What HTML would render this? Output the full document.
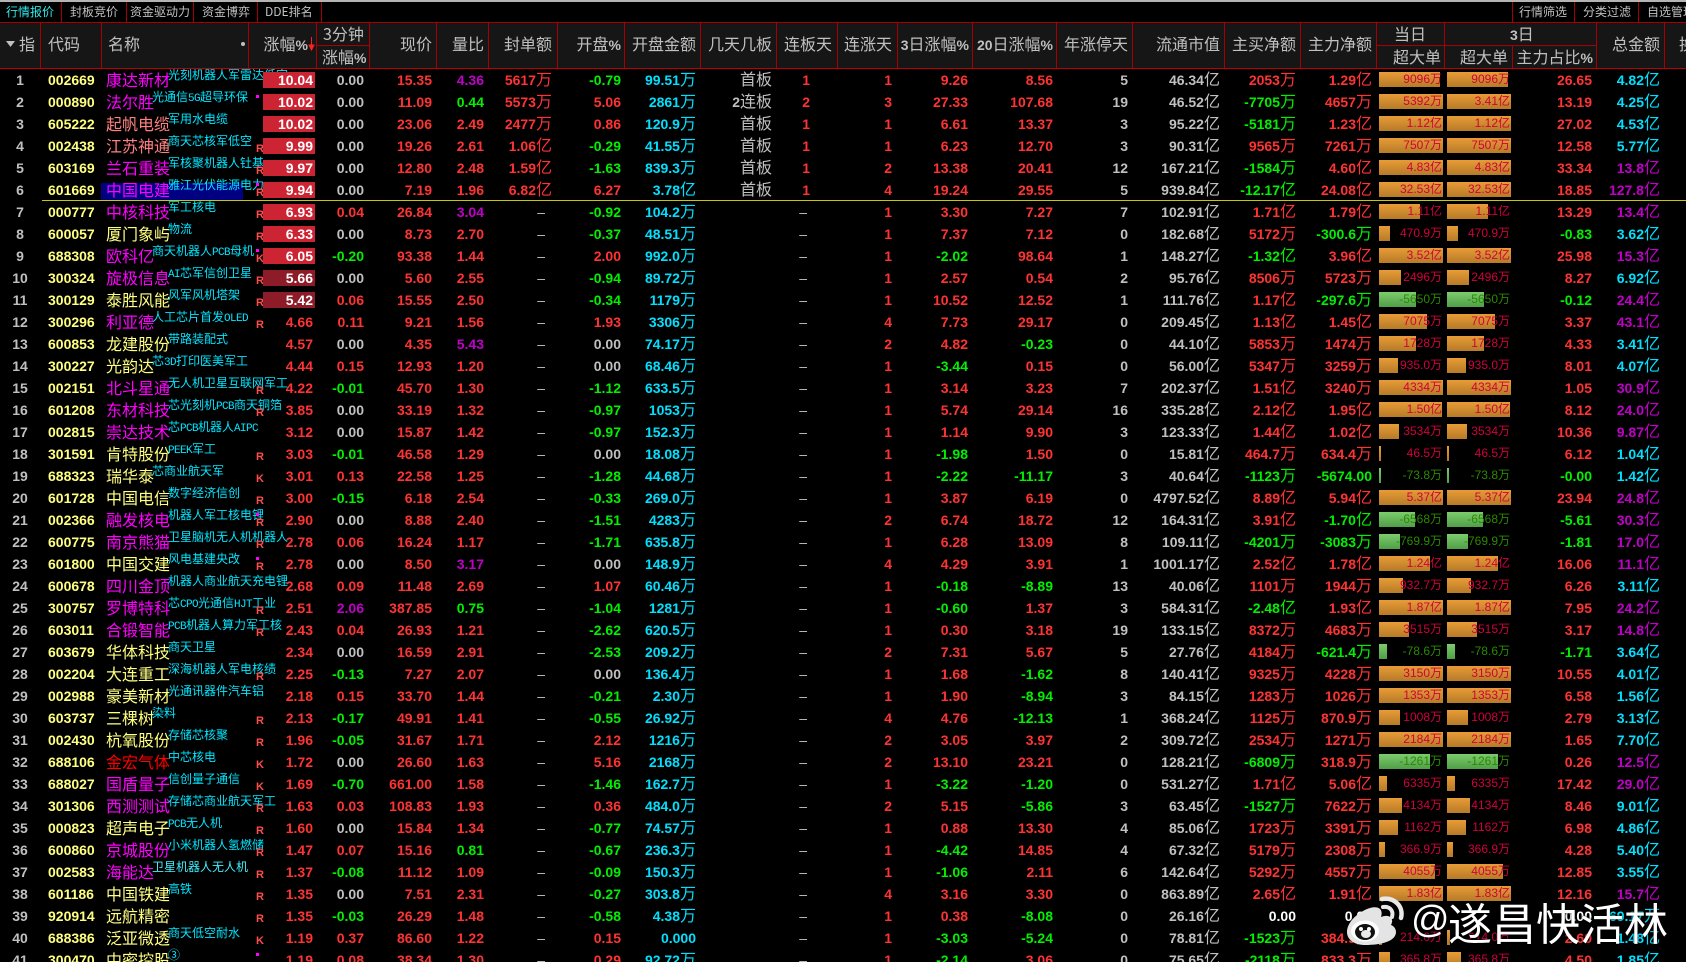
<!DOCTYPE html>
<html lang="zh"><head><meta charset="utf-8"><title>行情报价</title>
<style>
html,body{margin:0;padding:0;background:#000}
#p{position:relative;width:1686px;height:962px;overflow:hidden;background:#000;font-family:"Liberation Sans","WenQuanYi Zen Hei",sans-serif;font-synthesis:none;color:#c0c0c0}
.l{position:absolute;background:#a80000}
.tb{position:absolute;top:4px;font:12px/16px "WenQuanYi Zen Hei","Noto Sans CJK SC",sans-serif;color:#c0c0c0;white-space:nowrap}
.h{position:absolute;font:16px/22px "WenQuanYi Zen Hei","Noto Sans CJK SC",sans-serif;color:#c0c0c0;white-space:nowrap;top:32px}
.h b{font:bold 14px/22px "Liberation Sans",sans-serif}
.a{top:22px}.c{top:45px}
#g{position:absolute;left:0;top:69px;width:1686px;height:893px;overflow:hidden}
.r{position:relative;height:22px;width:1686px}
.r b{position:absolute;top:0;font:bold 14px/22px "Liberation Sans",sans-serif;color:#ff3333;white-space:nowrap}
.r u{font:400 16px/0 "WenQuanYi Zen Hei","Noto Sans CJK SC",sans-serif;text-decoration:none}
.r b:nth-of-type(1){left:0;width:40px;text-align:center;color:#c0c0c0}
.r b:nth-of-type(2){left:48px;color:#ffff80}
.r b:nth-of-type(3){right:1373px}
.r b:nth-of-type(4){right:1322px}
.r b:nth-of-type(5){right:1254px}
.r b:nth-of-type(6){right:1202px}
.r b:nth-of-type(7){right:1134px}
.r b:nth-of-type(8){right:1065px}
.r b:nth-of-type(9){right:990px;color:#00e0ff}
.r b:nth-of-type(10){right:914px;color:#c0c0c0}
.r b:nth-of-type(11){right:876px}
.r b:nth-of-type(12){right:794px}
.r b:nth-of-type(13){right:718px}
.r b:nth-of-type(14){right:633px}
.r b:nth-of-type(15){right:558px;color:#c0c0c0}
.r b:nth-of-type(16){right:466px;color:#c0c0c0}
.r b:nth-of-type(17){right:390px}
.r b:nth-of-type(18){right:314px}
.r b:nth-of-type(19){right:94px}
.r b:nth-of-type(20){right:26px;color:#00e0ff}
#g .n{color:#c0c0c0}#g .g{color:#00f000}#g .v{color:#c000c8}#g .w{color:#fff}
#g .d{font-weight:400;color:#c0c0c0}
.r b.d:nth-of-type(7){right:1141px}.r b.d:nth-of-type(11){right:879px}
#g .p,#g .q{right:1371px;top:3px;width:50px;height:16px;line-height:16px;padding-right:2px;text-align:right;color:#fff}
#g .p{background:#cc2433}#g .q{background:#8e1c28}
.r em{position:absolute;left:106px;top:-1px;font:16px/22px "WenQuanYi Zen Hei","Noto Sans CJK SC",sans-serif;color:#ffff80;white-space:nowrap}
.r em.m{color:#ff00ff}.r em.o{color:#ff8080}.r em.x{color:#ff0000}
.r a{position:absolute;left:168px;top:-1px;font:12px/14px "WenQuanYi Zen Hei","Noto Sans CJK SC",sans-serif;color:#00e6ff;white-space:nowrap}
.r a.s{left:152px}
.r tt{font:11px/0 "Liberation Mono",monospace;letter-spacing:-.6px}
.r s{position:absolute;left:256px;top:8px;font:bold 11px/12px "Liberation Sans",sans-serif;color:#ff4d4d;text-decoration:none}
.r dfn{position:absolute;left:256px;top:4px;width:3px;height:3px;background:#ff00ff}
.r kbd{position:absolute;left:1379px;top:3px;width:63px;height:15px;padding-right:1px;text-align:right;font:12px/14px "Liberation Sans","WenQuanYi Zen Hei",sans-serif;color:#d2003c;background:linear-gradient(#e89c36,#b67a28) no-repeat;white-space:nowrap}
.r kbd:nth-of-type(2){left:1447px}
.r kbd.e{color:#2a8a00;background-image:linear-gradient(#7ccb6c,#4f9f48)}
</style></head><body><div id="p">
<div class="l" style="left:0;top:0;width:1686px;height:2px;background:#b4b4b4"></div>
<div class="tb" style="left:6px;color:#30e8e8">行情报价</div>
<div class="tb" style="left:70px">封板竞价</div>
<div class="tb" style="left:130px">资金驱动力</div>
<div class="tb" style="left:202px">资金博弈</div>
<div class="tb" style="left:265px;">DDE排名</div>
<div class="tb" style="left:1519px">行情筛选</div>
<div class="tb" style="left:1583px">分类过滤</div>
<div class="tb" style="left:1647px">自选管理</div>
<div class="l" style="left:61px;top:2px;width:1px;height:20px"></div>
<div class="l" style="left:126px;top:2px;width:1px;height:20px"></div>
<div class="l" style="left:193px;top:2px;width:1px;height:20px"></div>
<div class="l" style="left:257px;top:2px;width:1px;height:20px"></div>
<div class="l" style="left:321px;top:2px;width:1px;height:20px"></div>
<div class="l" style="left:1512px;top:2px;width:1px;height:20px"></div>
<div class="l" style="left:1574px;top:2px;width:1px;height:20px"></div>
<div class="l" style="left:1638px;top:2px;width:1px;height:20px"></div>
<div style="position:absolute;left:0;top:23px;width:1686px;height:45px;background:#161616"></div>
<div class="l" style="left:0;top:22px;width:1686px;height:1px"></div>
<div class="l" style="left:0;top:68px;width:1686px;height:1px;background:#c00000"></div>
<div class="l" style="left:316px;top:45px;width:53px;height:1px"></div>
<div class="l" style="left:1376px;top:45px;width:220px;height:1px"></div>
<div class="l" style="left:40px;top:23px;width:1px;height:45px"></div>
<div class="l" style="left:101px;top:23px;width:1px;height:45px"></div>
<div class="l" style="left:248px;top:23px;width:1px;height:45px"></div>
<div class="l" style="left:316px;top:23px;width:1px;height:45px"></div>
<div class="l" style="left:369px;top:23px;width:1px;height:45px"></div>
<div class="l" style="left:436px;top:23px;width:1px;height:45px"></div>
<div class="l" style="left:488px;top:23px;width:1px;height:45px"></div>
<div class="l" style="left:557px;top:23px;width:1px;height:45px"></div>
<div class="l" style="left:624px;top:23px;width:1px;height:45px"></div>
<div class="l" style="left:700px;top:23px;width:1px;height:45px"></div>
<div class="l" style="left:776px;top:23px;width:1px;height:45px"></div>
<div class="l" style="left:837px;top:23px;width:1px;height:45px"></div>
<div class="l" style="left:897px;top:23px;width:1px;height:45px"></div>
<div class="l" style="left:972px;top:23px;width:1px;height:45px"></div>
<div class="l" style="left:1056px;top:23px;width:1px;height:45px"></div>
<div class="l" style="left:1132px;top:23px;width:1px;height:45px"></div>
<div class="l" style="left:1224px;top:23px;width:1px;height:45px"></div>
<div class="l" style="left:1300px;top:23px;width:1px;height:45px"></div>
<div class="l" style="left:1376px;top:23px;width:1px;height:45px"></div>
<div class="l" style="left:1444px;top:23px;width:1px;height:22px"></div>
<div class="l" style="left:1444px;top:46px;width:1px;height:22px"></div>
<div class="l" style="left:1512px;top:46px;width:1px;height:22px"></div>
<div class="l" style="left:1596px;top:23px;width:1px;height:45px"></div>
<div class="l" style="left:1664px;top:23px;width:1px;height:45px"></div>
<svg style="position:absolute;left:6px;top:41px" width="10" height="7"><path d="M0 0H9L4.5 6z" fill="#c0c0c0"/></svg>
<div class="h" style="left:19px">指</div>
<div class="h" style="left:48px">代码</div>
<div class="h" style="left:108px">名称</div>
<div style="position:absolute;left:241px;top:42px;width:4px;height:4px;border-radius:2px;background:#c0c0c0"></div>
<div class="h" style="right:1378px">涨幅<b>%</b></div>
<svg style="position:absolute;left:308px;top:37px" width="7" height="14"><path d="M3.5 0V12M1 8L3.5 13L6 8z" stroke="#ff2020" fill="#ff2020"/></svg>
<div class="h a" style="left:323px">3分钟</div>
<div class="h c" style="left:322px">涨幅<b>%</b></div>
<div class="h" style="right:1254px">现价</div>
<div class="h" style="right:1202px">量比</div>
<div class="h" style="right:1134px">封单额</div>
<div class="h" style="right:1065px">开盘<b>%</b></div>
<div class="h" style="right:990px">开盘金额</div>
<div class="h" style="right:914px">几天几板</div>
<div class="h" style="right:854px">连板天</div>
<div class="h" style="right:794px">连涨天</div>
<div class="h" style="right:717px"><b>3</b>日涨幅<b>%</b></div>
<div class="h" style="right:633px"><b>20</b>日涨幅<b>%</b></div>
<div class="h" style="right:558px">年涨停天</div>
<div class="h" style="right:466px">流通市值</div>
<div class="h" style="right:390px">主买净额</div>
<div class="h" style="right:314px">主力净额</div>
<div class="h a" style="left:1394px">当日</div>
<div class="h a" style="left:1510px"><b>3</b>日</div>
<div class="h c" style="right:245px">超大单</div>
<div class="h c" style="right:178px">超大单</div>
<div class="h c" style="right:93px">主力占比<b>%</b></div>
<div class="h" style="right:26px">总金额</div>
<div class="h" style="left:1679px">换手</div>
<div id="g">
<div class="r"><b>1</b><b>002669</b><em class="m">康达新材</em><a>光刻机器人军雷达低空</a><b class="p">10.04</b><b class="n">0.00</b><b>15.35</b><b class="v">4.36</b><b>5617<u>万</u></b><b class="g">-0.79</b><b>99.51<u>万</u></b><b><u>首板</u></b><b>1</b><b>1</b><b>9.26</b><b>8.56</b><b>5</b><b>46.34<u>亿</u></b><b>2053<u>万</u></b><b>1.29<u>亿</u></b><kbd style="background-size:61px">9096万</kbd><kbd style="background-size:61px">9096万</kbd><b>26.65</b><b>4.82<u>亿</u></b></div>
<div class="r"><b>2</b><b>000890</b><em class="m">法尔胜</em><a class="s">光通信<tt>5G</tt>超导环保</a><dfn></dfn><b class="p">10.02</b><b class="n">0.00</b><b>11.09</b><b class="g">0.44</b><b>5573<u>万</u></b><b>5.06</b><b>2861<u>万</u></b><b>2<u>连板</u></b><b>2</b><b>3</b><b>27.33</b><b>107.68</b><b>19</b><b>46.52<u>亿</u></b><b class="g">-7705<u>万</u></b><b>4657<u>万</u></b><kbd>5392万</kbd><kbd>3.41亿</kbd><b>13.19</b><b>4.25<u>亿</u></b></div>
<div class="r"><b>3</b><b>605222</b><em class="o">起帆电缆</em><a>军用水电缆</a><b class="p">10.02</b><b class="n">0.00</b><b>23.06</b><b>2.49</b><b>2477<u>万</u></b><b>0.86</b><b>120.9<u>万</u></b><b><u>首板</u></b><b>1</b><b>1</b><b>6.61</b><b>13.37</b><b>3</b><b>95.22<u>亿</u></b><b class="g">-5181<u>万</u></b><b>1.23<u>亿</u></b><kbd>1.12亿</kbd><kbd>1.12亿</kbd><b>27.02</b><b>4.53<u>亿</u></b></div>
<div class="r"><b>4</b><b>002438</b><em class="o">江苏神通</em><a>商天芯核军低空</a><s>R</s><b class="p">9.99</b><b class="n">0.00</b><b>19.26</b><b>2.61</b><b>1.06<u>亿</u></b><b class="g">-0.29</b><b>41.55<u>万</u></b><b><u>首板</u></b><b>1</b><b>1</b><b>6.23</b><b>12.70</b><b>3</b><b>90.31<u>亿</u></b><b>9565<u>万</u></b><b>7261<u>万</u></b><kbd>7507万</kbd><kbd>7507万</kbd><b>12.58</b><b>5.77<u>亿</u></b></div>
<div class="r"><b>5</b><b>603169</b><em class="m">兰石重装</em><a>军核聚机器人钍基</a><s>R</s><b class="p">9.97</b><b class="n">0.00</b><b>12.80</b><b>2.48</b><b>1.59<u>亿</u></b><b class="g">-1.63</b><b>839.3<u>万</u></b><b><u>首板</u></b><b>1</b><b>2</b><b>13.38</b><b>20.41</b><b>12</b><b>167.21<u>亿</u></b><b class="g">-1584<u>万</u></b><b>4.60<u>亿</u></b><kbd>4.83亿</kbd><kbd>4.83亿</kbd><b>33.34</b><b class="v">13.8<u>亿</u></b></div>
<div class="r"><div style="position:absolute;left:101px;top:4px;width:142px;height:17px;background:#000080"></div><b>6</b><b>601669</b><em class="m">中国电建</em><a>雅江光伏能源电力</a><dfn></dfn><s>R</s><b class="p">9.94</b><b class="n">0.00</b><b>7.19</b><b>1.96</b><b>6.82<u>亿</u></b><b>6.27</b><b>3.78<u>亿</u></b><b><u>首板</u></b><b>1</b><b>4</b><b>19.24</b><b>29.55</b><b>5</b><b>939.84<u>亿</u></b><b class="g">-12.17<u>亿</u></b><b>24.08<u>亿</u></b><kbd>32.53亿</kbd><kbd>32.53亿</kbd><b>18.85</b><b class="v">127.8<u>亿</u></b><div style="position:absolute;left:42px;top:21px;width:1644px;height:1px;background:#c8c800"></div></div>
<div class="r"><b>7</b><b>000777</b><em class="m">中核科技</em><a>军工核电</a><s>R</s><b class="p">6.93</b><b>0.04</b><b>26.84</b><b class="v">3.04</b><b class="d">–</b><b class="g">-0.92</b><b>104.2<u>万</u></b><b></b><b class="d">–</b><b>1</b><b>3.30</b><b>7.27</b><b>7</b><b>102.91<u>亿</u></b><b>1.71<u>亿</u></b><b>1.79<u>亿</u></b><kbd style="background-size:41px">1.11亿</kbd><kbd style="background-size:41px">1.11亿</kbd><b>13.29</b><b class="v">13.4<u>亿</u></b></div>
<div class="r"><b>8</b><b>600057</b><em>厦门象屿</em><a>物流</a><s>R</s><b class="p">6.33</b><b class="n">0.00</b><b>8.73</b><b>2.70</b><b class="d">–</b><b class="g">-0.37</b><b>48.51<u>万</u></b><b></b><b class="d">–</b><b>1</b><b>7.37</b><b>7.12</b><b>0</b><b>182.68<u>亿</u></b><b>5172<u>万</u></b><b class="g">-300.6<u>万</u></b><kbd style="background-size:11px">470.9万</kbd><kbd style="background-size:11px">470.9万</kbd><b class="g">-0.83</b><b>3.62<u>亿</u></b></div>
<div class="r"><b>9</b><b>688308</b><em class="m">欧科亿</em><a class="s">商天机器人<tt>PCB</tt>母机</a><dfn></dfn><s>K</s><b class="p">6.05</b><b class="g">-0.20</b><b>93.38</b><b>1.44</b><b class="d">–</b><b>2.00</b><b>992.0<u>万</u></b><b></b><b class="d">–</b><b>1</b><b class="g">-2.02</b><b>98.64</b><b>1</b><b>148.27<u>亿</u></b><b class="g">-1.32<u>亿</u></b><b>3.96<u>亿</u></b><kbd>3.52亿</kbd><kbd>3.52亿</kbd><b>25.98</b><b class="v">15.3<u>亿</u></b></div>
<div class="r"><b>10</b><b>300324</b><em class="m">旋极信息</em><a><tt>AI</tt>芯军信创卫星</a><s>R</s><b class="q">5.66</b><b class="n">0.00</b><b>5.60</b><b>2.55</b><b class="d">–</b><b class="g">-0.94</b><b>89.72<u>万</u></b><b></b><b class="d">–</b><b>1</b><b>2.57</b><b>0.54</b><b>2</b><b>95.76<u>亿</u></b><b>8506<u>万</u></b><b>5723<u>万</u></b><kbd style="background-size:22px">2496万</kbd><kbd style="background-size:22px">2496万</kbd><b>8.27</b><b>6.92<u>亿</u></b></div>
<div class="r"><b>11</b><b>300129</b><em>泰胜风能</em><a>风军风机塔架</a><s>R</s><b class="q">5.42</b><b>0.06</b><b>15.55</b><b>2.50</b><b class="d">–</b><b class="g">-0.34</b><b>1179<u>万</u></b><b></b><b class="d">–</b><b>1</b><b>10.52</b><b>12.52</b><b>1</b><b>111.76<u>亿</u></b><b>1.17<u>亿</u></b><b class="g">-297.6<u>万</u></b><kbd class="e" style="background-size:37px">-5650万</kbd><kbd class="e" style="background-size:37px">-5650万</kbd><b class="g">-0.12</b><b class="v">24.4<u>亿</u></b></div>
<div class="r"><b>12</b><b>300296</b><em class="m">利亚德</em><a class="s">人工芯片首发<tt>OLED</tt></a><s>R</s><b>4.66</b><b>0.11</b><b>9.21</b><b>1.56</b><b class="d">–</b><b>1.93</b><b>3306<u>万</u></b><b></b><b class="d">–</b><b>4</b><b>7.73</b><b>29.17</b><b>0</b><b>209.45<u>亿</u></b><b>1.13<u>亿</u></b><b>1.45<u>亿</u></b><kbd style="background-size:48px">7075万</kbd><kbd style="background-size:48px">7075万</kbd><b>3.37</b><b class="v">43.1<u>亿</u></b></div>
<div class="r"><b>13</b><b>600853</b><em>龙建股份</em><a>带路装配式</a><b>4.57</b><b class="n">0.00</b><b>4.35</b><b class="v">5.43</b><b class="d">–</b><b class="n">0.00</b><b>74.17<u>万</u></b><b></b><b class="d">–</b><b>2</b><b>4.82</b><b class="g">-0.23</b><b>0</b><b>44.10<u>亿</u></b><b>5853<u>万</u></b><b>1474<u>万</u></b><kbd style="background-size:37px">1728万</kbd><kbd style="background-size:37px">1728万</kbd><b>4.33</b><b>3.41<u>亿</u></b></div>
<div class="r"><b>14</b><b>300227</b><em>光韵达</em><a class="s">芯<tt>3D</tt>打印医美军工</a><b>4.44</b><b>0.15</b><b>12.93</b><b>1.20</b><b class="d">–</b><b class="n">0.00</b><b>68.46<u>万</u></b><b></b><b class="d">–</b><b>1</b><b class="g">-3.44</b><b>0.15</b><b>0</b><b>56.00<u>亿</u></b><b>5347<u>万</u></b><b>3259<u>万</u></b><kbd style="background-size:19px">935.0万</kbd><kbd style="background-size:19px">935.0万</kbd><b>8.01</b><b>4.07<u>亿</u></b></div>
<div class="r"><b>15</b><b>002151</b><em class="m">北斗星通</em><a>无人机卫星互联网军工</a><s>R</s><b>4.22</b><b class="g">-0.01</b><b>45.70</b><b>1.30</b><b class="d">–</b><b class="g">-1.12</b><b>633.5<u>万</u></b><b></b><b class="d">–</b><b>1</b><b>3.14</b><b>3.23</b><b>7</b><b>202.37<u>亿</u></b><b>1.51<u>亿</u></b><b>3240<u>万</u></b><kbd>4334万</kbd><kbd>4334万</kbd><b>1.05</b><b class="v">30.9<u>亿</u></b></div>
<div class="r"><b>16</b><b>601208</b><em class="m">东材科技</em><a>芯光刻机<tt>PCB</tt>商天铜箔</a><s>R</s><b>3.85</b><b class="n">0.00</b><b>33.19</b><b>1.32</b><b class="d">–</b><b class="g">-0.97</b><b>1053<u>万</u></b><b></b><b class="d">–</b><b>1</b><b>5.74</b><b>29.14</b><b>16</b><b>335.28<u>亿</u></b><b>2.12<u>亿</u></b><b>1.95<u>亿</u></b><kbd style="background-size:63px">1.50亿</kbd><kbd style="background-size:63px">1.50亿</kbd><b>8.12</b><b class="v">24.0<u>亿</u></b></div>
<div class="r"><b>17</b><b>002815</b><em class="m">崇达技术</em><a>芯<tt>PCB</tt>机器人<tt>AIPC</tt></a><b>3.12</b><b class="n">0.00</b><b>15.87</b><b>1.42</b><b class="d">–</b><b class="g">-0.97</b><b>152.3<u>万</u></b><b></b><b class="d">–</b><b>1</b><b>1.14</b><b>9.90</b><b>3</b><b>123.33<u>亿</u></b><b>1.44<u>亿</u></b><b>1.02<u>亿</u></b><kbd style="background-size:20px">3534万</kbd><kbd style="background-size:20px">3534万</kbd><b>10.36</b><b class="v">9.87<u>亿</u></b></div>
<div class="r"><b>18</b><b>301591</b><em>肯特股份</em><a><tt>PEEK</tt>军工</a><s>R</s><b>3.03</b><b class="g">-0.01</b><b>46.58</b><b>1.29</b><b class="d">–</b><b class="n">0.00</b><b>18.08<u>万</u></b><b></b><b class="d">–</b><b>1</b><b class="g">-1.98</b><b>1.50</b><b>0</b><b>15.81<u>亿</u></b><b>464.7<u>万</u></b><b>634.4<u>万</u></b><kbd style="background-size:2px">46.5万</kbd><kbd style="background-size:2px">46.5万</kbd><b>6.12</b><b>1.04<u>亿</u></b></div>
<div class="r"><b>19</b><b>688323</b><em>瑞华泰</em><a class="s">芯商业航天军</a><s>K</s><b>3.01</b><b>0.13</b><b>22.58</b><b>1.25</b><b class="d">–</b><b class="g">-1.28</b><b>44.68<u>万</u></b><b></b><b class="d">–</b><b>1</b><b class="g">-2.22</b><b class="g">-11.17</b><b>3</b><b>40.64<u>亿</u></b><b class="g">-1123<u>万</u></b><b class="g">-5674.00</b><kbd class="e" style="background-size:2px">-73.8万</kbd><kbd class="e" style="background-size:2px">-73.8万</kbd><b class="g">-0.00</b><b>1.42<u>亿</u></b></div>
<div class="r"><b>20</b><b>601728</b><em>中国电信</em><a>数字经济信创</a><s>R</s><b>3.00</b><b class="g">-0.15</b><b>6.18</b><b>2.54</b><b class="d">–</b><b class="g">-0.33</b><b>269.0<u>万</u></b><b></b><b class="d">–</b><b>1</b><b>3.87</b><b>6.19</b><b>0</b><b>4797.52<u>亿</u></b><b>8.89<u>亿</u></b><b>5.94<u>亿</u></b><kbd>5.37亿</kbd><kbd>5.37亿</kbd><b>23.94</b><b class="v">24.8<u>亿</u></b></div>
<div class="r"><b>21</b><b>002366</b><em class="m">融发核电</em><a>机器人军工核电锂</a><dfn></dfn><s>R</s><b>2.90</b><b class="n">0.00</b><b>8.88</b><b>2.40</b><b class="d">–</b><b class="g">-1.51</b><b>4283<u>万</u></b><b></b><b class="d">–</b><b>2</b><b>6.74</b><b>18.72</b><b>12</b><b>164.31<u>亿</u></b><b>3.91<u>亿</u></b><b class="g">-1.70<u>亿</u></b><kbd class="e" style="background-size:36px">-6568万</kbd><kbd class="e" style="background-size:36px">-6568万</kbd><b class="g">-5.61</b><b class="v">30.3<u>亿</u></b></div>
<div class="r"><b>22</b><b>600775</b><em class="m">南京熊猫</em><a>卫星脑机无人机机器人</a><s>R</s><b>2.78</b><b>0.06</b><b>16.24</b><b>1.17</b><b class="d">–</b><b class="g">-1.71</b><b>635.8<u>万</u></b><b></b><b class="d">–</b><b>1</b><b>6.28</b><b>13.09</b><b>8</b><b>109.11<u>亿</u></b><b class="g">-4201<u>万</u></b><b class="g">-3083<u>万</u></b><kbd class="e" style="background-size:21px">-769.9万</kbd><kbd class="e" style="background-size:21px">-769.9万</kbd><b class="g">-1.81</b><b class="v">17.0<u>亿</u></b></div>
<div class="r"><b>23</b><b>601800</b><em>中国交建</em><a>风电基建央改</a><dfn></dfn><s>R</s><b>2.78</b><b class="n">0.00</b><b>8.50</b><b class="v">3.17</b><b class="d">–</b><b class="n">0.00</b><b>148.9<u>万</u></b><b></b><b class="d">–</b><b>4</b><b>4.29</b><b>3.91</b><b>1</b><b>1001.17<u>亿</u></b><b>2.52<u>亿</u></b><b>1.78<u>亿</u></b><kbd style="background-size:51px">1.24亿</kbd><kbd style="background-size:51px">1.24亿</kbd><b>16.06</b><b class="v">11.1<u>亿</u></b></div>
<div class="r"><b>24</b><b>600678</b><em class="m">四川金顶</em><a>机器人商业航天充电锂</a><b>2.68</b><b>0.09</b><b>11.48</b><b>2.69</b><b class="d">–</b><b>1.07</b><b>60.46<u>万</u></b><b></b><b class="d">–</b><b>1</b><b class="g">-0.18</b><b class="g">-8.89</b><b>13</b><b>40.06<u>亿</u></b><b>1101<u>万</u></b><b>1944<u>万</u></b><kbd style="background-size:24px">932.7万</kbd><kbd style="background-size:24px">932.7万</kbd><b>6.26</b><b>3.11<u>亿</u></b></div>
<div class="r"><b>25</b><b>300757</b><em class="m">罗博特科</em><a>芯<tt>CPO</tt>光通信<tt>HJT</tt>工业</a><s>R</s><b>2.51</b><b class="v">2.06</b><b>387.85</b><b class="g">0.75</b><b class="d">–</b><b class="g">-1.04</b><b>1281<u>万</u></b><b></b><b class="d">–</b><b>1</b><b class="g">-0.60</b><b>1.37</b><b>3</b><b>584.31<u>亿</u></b><b class="g">-2.48<u>亿</u></b><b>1.93<u>亿</u></b><kbd>1.87亿</kbd><kbd>1.87亿</kbd><b>7.95</b><b class="v">24.2<u>亿</u></b></div>
<div class="r"><b>26</b><b>603011</b><em class="m">合锻智能</em><a><tt>PCB</tt>机器人算力军工核</a><s>R</s><b>2.43</b><b>0.04</b><b>26.93</b><b>1.21</b><b class="d">–</b><b class="g">-2.62</b><b>620.5<u>万</u></b><b></b><b class="d">–</b><b>1</b><b>0.30</b><b>3.18</b><b>19</b><b>133.15<u>亿</u></b><b>8372<u>万</u></b><b>4683<u>万</u></b><kbd style="background-size:30px">3515万</kbd><kbd style="background-size:30px">3515万</kbd><b>3.17</b><b class="v">14.8<u>亿</u></b></div>
<div class="r"><b>27</b><b>603679</b><em>华体科技</em><a>商天卫星</a><b>2.34</b><b class="n">0.00</b><b>16.59</b><b>2.91</b><b class="d">–</b><b class="g">-2.53</b><b>209.2<u>万</u></b><b></b><b class="d">–</b><b>2</b><b>7.31</b><b>5.67</b><b>5</b><b>27.76<u>亿</u></b><b>4184<u>万</u></b><b class="g">-621.4<u>万</u></b><kbd class="e" style="background-size:8px">-78.6万</kbd><kbd class="e" style="background-size:8px">-78.6万</kbd><b class="g">-1.71</b><b>3.64<u>亿</u></b></div>
<div class="r"><b>28</b><b>002204</b><em>大连重工</em><a>深海机器人军电核绩</a><s>R</s><b>2.25</b><b class="g">-0.13</b><b>7.27</b><b>2.07</b><b class="d">–</b><b class="n">0.00</b><b>136.4<u>万</u></b><b></b><b class="d">–</b><b>1</b><b>1.68</b><b class="g">-1.62</b><b>8</b><b>140.41<u>亿</u></b><b>9325<u>万</u></b><b>4228<u>万</u></b><kbd>3150万</kbd><kbd>3150万</kbd><b>10.55</b><b>4.01<u>亿</u></b></div>
<div class="r"><b>29</b><b>002988</b><em>豪美新材</em><a>光通讯器件汽车铝</a><b>2.18</b><b>0.15</b><b>33.70</b><b>1.44</b><b class="d">–</b><b class="g">-0.21</b><b>2.30<u>万</u></b><b></b><b class="d">–</b><b>1</b><b>1.90</b><b class="g">-8.94</b><b>3</b><b>84.15<u>亿</u></b><b>1283<u>万</u></b><b>1026<u>万</u></b><kbd>1353万</kbd><kbd>1353万</kbd><b>6.58</b><b>1.56<u>亿</u></b></div>
<div class="r"><b>30</b><b>603737</b><em>三棵树</em><a class="s">染料</a><s>R</s><b>2.13</b><b class="g">-0.17</b><b>49.91</b><b>1.41</b><b class="d">–</b><b class="g">-0.55</b><b>26.92<u>万</u></b><b></b><b class="d">–</b><b>4</b><b>4.76</b><b class="g">-12.13</b><b>1</b><b>368.24<u>亿</u></b><b>1125<u>万</u></b><b>870.9<u>万</u></b><kbd style="background-size:21px">1008万</kbd><kbd style="background-size:21px">1008万</kbd><b>2.79</b><b>3.13<u>亿</u></b></div>
<div class="r"><b>31</b><b>002430</b><em>杭氧股份</em><a>存储芯核聚</a><s>R</s><b>1.96</b><b class="g">-0.05</b><b>31.67</b><b>1.71</b><b class="d">–</b><b>2.12</b><b>1216<u>万</u></b><b></b><b class="d">–</b><b>2</b><b>3.05</b><b>3.97</b><b>2</b><b>309.72<u>亿</u></b><b>2534<u>万</u></b><b>1271<u>万</u></b><kbd>2184万</kbd><kbd>2184万</kbd><b>1.65</b><b>7.70<u>亿</u></b></div>
<div class="r"><b>32</b><b>688106</b><em class="x">金宏气体</em><a>中芯核电</a><s>K</s><b>1.72</b><b class="n">0.00</b><b>26.60</b><b>1.63</b><b class="d">–</b><b>5.16</b><b>2168<u>万</u></b><b></b><b class="d">–</b><b>2</b><b>13.10</b><b>23.21</b><b>0</b><b>128.21<u>亿</u></b><b class="g">-6809<u>万</u></b><b>318.9<u>万</u></b><kbd class="e" style="background-size:51px">-1261万</kbd><kbd class="e" style="background-size:51px">-1261万</kbd><b>0.26</b><b class="v">12.5<u>亿</u></b></div>
<div class="r"><b>33</b><b>688027</b><em class="m">国盾量子</em><a>信创量子通信</a><s>K</s><b>1.69</b><b class="g">-0.70</b><b>661.00</b><b>1.58</b><b class="d">–</b><b class="g">-1.46</b><b>162.7<u>万</u></b><b></b><b class="d">–</b><b>1</b><b class="g">-3.22</b><b class="g">-1.20</b><b>0</b><b>531.27<u>亿</u></b><b>1.71<u>亿</u></b><b>5.06<u>亿</u></b><kbd style="background-size:8px">6335万</kbd><kbd style="background-size:8px">6335万</kbd><b>17.42</b><b class="v">29.0<u>亿</u></b></div>
<div class="r"><b>34</b><b>301306</b><em class="m">西测测试</em><a>存储芯商业航天军工</a><s>R</s><b>1.63</b><b>0.03</b><b>108.83</b><b>1.93</b><b class="d">–</b><b>0.36</b><b>484.0<u>万</u></b><b></b><b class="d">–</b><b>2</b><b>5.15</b><b class="g">-5.86</b><b>3</b><b>63.45<u>亿</u></b><b class="g">-1527<u>万</u></b><b>7622<u>万</u></b><kbd style="background-size:23px">4134万</kbd><kbd style="background-size:23px">4134万</kbd><b>8.46</b><b>9.01<u>亿</u></b></div>
<div class="r"><b>35</b><b>000823</b><em>超声电子</em><a><tt>PCB</tt>无人机</a><s>R</s><b>1.60</b><b class="n">0.00</b><b>15.84</b><b>1.34</b><b class="d">–</b><b class="g">-0.77</b><b>74.57<u>万</u></b><b></b><b class="d">–</b><b>1</b><b>0.88</b><b>13.30</b><b>4</b><b>85.06<u>亿</u></b><b>1723<u>万</u></b><b>3391<u>万</u></b><kbd style="background-size:19px">1162万</kbd><kbd style="background-size:19px">1162万</kbd><b>6.98</b><b>4.86<u>亿</u></b></div>
<div class="r"><b>36</b><b>600860</b><em class="m">京城股份</em><a>小米机器人氢燃储</a><s>R</s><b>1.47</b><b>0.07</b><b>15.16</b><b class="g">0.81</b><b class="d">–</b><b class="g">-0.67</b><b>236.3<u>万</u></b><b></b><b class="d">–</b><b>1</b><b class="g">-4.42</b><b>14.85</b><b>4</b><b>67.32<u>亿</u></b><b>5179<u>万</u></b><b>2308<u>万</u></b><kbd style="background-size:6px">366.9万</kbd><kbd style="background-size:6px">366.9万</kbd><b>4.28</b><b>5.40<u>亿</u></b></div>
<div class="r"><b>37</b><b>002583</b><em class="m">海能达</em><a class="s" style="color:#40f0ff">卫星机器人无人机</a><s>R</s><b>1.37</b><b class="g">-0.08</b><b>11.12</b><b>1.09</b><b class="d">–</b><b class="g">-0.09</b><b>150.3<u>万</u></b><b></b><b class="d">–</b><b>1</b><b class="g">-1.06</b><b>2.11</b><b>6</b><b>142.64<u>亿</u></b><b>5292<u>万</u></b><b>4557<u>万</u></b><kbd style="background-size:56px">4055万</kbd><kbd style="background-size:56px">4055万</kbd><b>12.85</b><b>3.55<u>亿</u></b></div>
<div class="r"><b>38</b><b>601186</b><em>中国铁建</em><a>高铁</a><s>R</s><b>1.35</b><b class="n">0.00</b><b>7.51</b><b>2.31</b><b class="d">–</b><b class="g">-0.27</b><b>303.8<u>万</u></b><b></b><b class="d">–</b><b>4</b><b>3.16</b><b>3.30</b><b>0</b><b>863.89<u>亿</u></b><b>2.65<u>亿</u></b><b>1.91<u>亿</u></b><kbd>1.83亿</kbd><kbd>1.83亿</kbd><b>12.16</b><b class="v">15.7<u>亿</u></b></div>
<div class="r"><b>39</b><b>920914</b><em>远航精密</em><s>R</s><b>1.35</b><b class="g">-0.03</b><b>26.29</b><b>1.48</b><b class="d">–</b><b class="g">-0.58</b><b>4.38<u>万</u></b><b></b><b class="d">–</b><b>1</b><b>0.38</b><b class="g">-8.08</b><b>0</b><b>26.16<u>亿</u></b><b class="w">0.00</b><b class="w">0.00</b><b class="w">0.00</b><b>69.17<u>万</u></b></div>
<div class="r"><b>40</b><b>688386</b><em>泛亚微透</em><a>商天低空耐水</a><s>K</s><b>1.19</b><b>0.37</b><b>86.60</b><b>1.22</b><b class="d">–</b><b>0.15</b><b>0.000</b><b></b><b class="d">–</b><b>1</b><b class="g">-3.03</b><b class="g">-5.24</b><b>0</b><b>78.81<u>亿</u></b><b class="g">-1523<u>万</u></b><b>384.9<u>万</u></b><kbd style="background-size:3px">214.0万</kbd><kbd style="background-size:3px">214.0万</kbd><b>2.60</b><b>1.48<u>亿</u></b></div>
<div class="r"><b>41</b><b>300470</b><em>中密控股</em><a>③</a><dfn></dfn><b>1.19</b><b>0.08</b><b>38.34</b><b>1.30</b><b class="d">–</b><b>0.29</b><b>92.72<u>万</u></b><b></b><b class="d">–</b><b>1</b><b class="g">-2.14</b><b>3.06</b><b>0</b><b>75.65<u>亿</u></b><b class="g">-2118<u>万</u></b><b>833.3<u>万</u></b><kbd style="background-size:11px">365.8万</kbd><kbd style="background-size:14px">365.8万</kbd><b>4.50</b><b>1.85<u>亿</u></b></div>
</div>
<svg style="position:absolute;left:1346px;top:896px" width="60" height="52" viewBox="0 0 60 52">
<path d="M19 49C9 49 1 44 1 36 1 28 8 20 17 15c7-4 14-5 17-2 2 2 2 5 1 8 5-2 9-1 10 1 2 2 1 5 0 7 3 1 5 4 5 7 0 9-14 13-31 13z" fill="#e4e4e4"/>
<ellipse cx="19" cy="35" rx="14" ry="10.5" fill="#fff"/>
<ellipse cx="19" cy="36" rx="10" ry="8" fill="#111"/>
<ellipse cx="20" cy="38" rx="5" ry="4" fill="#e8e8e8"/>
<circle cx="15" cy="33" r="2" fill="#fff"/>
<circle cx="23" cy="33" r="2" fill="#fff"/>
<path d="M36 3C48 1 58 10 55 22" fill="none" stroke="#e8e8e8" stroke-width="4.5" stroke-linecap="round"/>
<path d="M37 11C43 10 48 14 46 21" fill="none" stroke="#e8e8e8" stroke-width="4" stroke-linecap="round"/>
</svg>
<div style="position:absolute;left:1411px;top:894px;font:38px/52px 'Liberation Sans',sans-serif;color:#fff;text-shadow:0 0 2px #000;white-space:nowrap">@</div>
<div style="position:absolute;left:1448px;top:893px;font:44px/56px 'Noto Sans CJK SC',sans-serif;color:#fff;text-shadow:0 0 2px #000;white-space:nowrap">遂昌快活林</div>
</div></body></html>
